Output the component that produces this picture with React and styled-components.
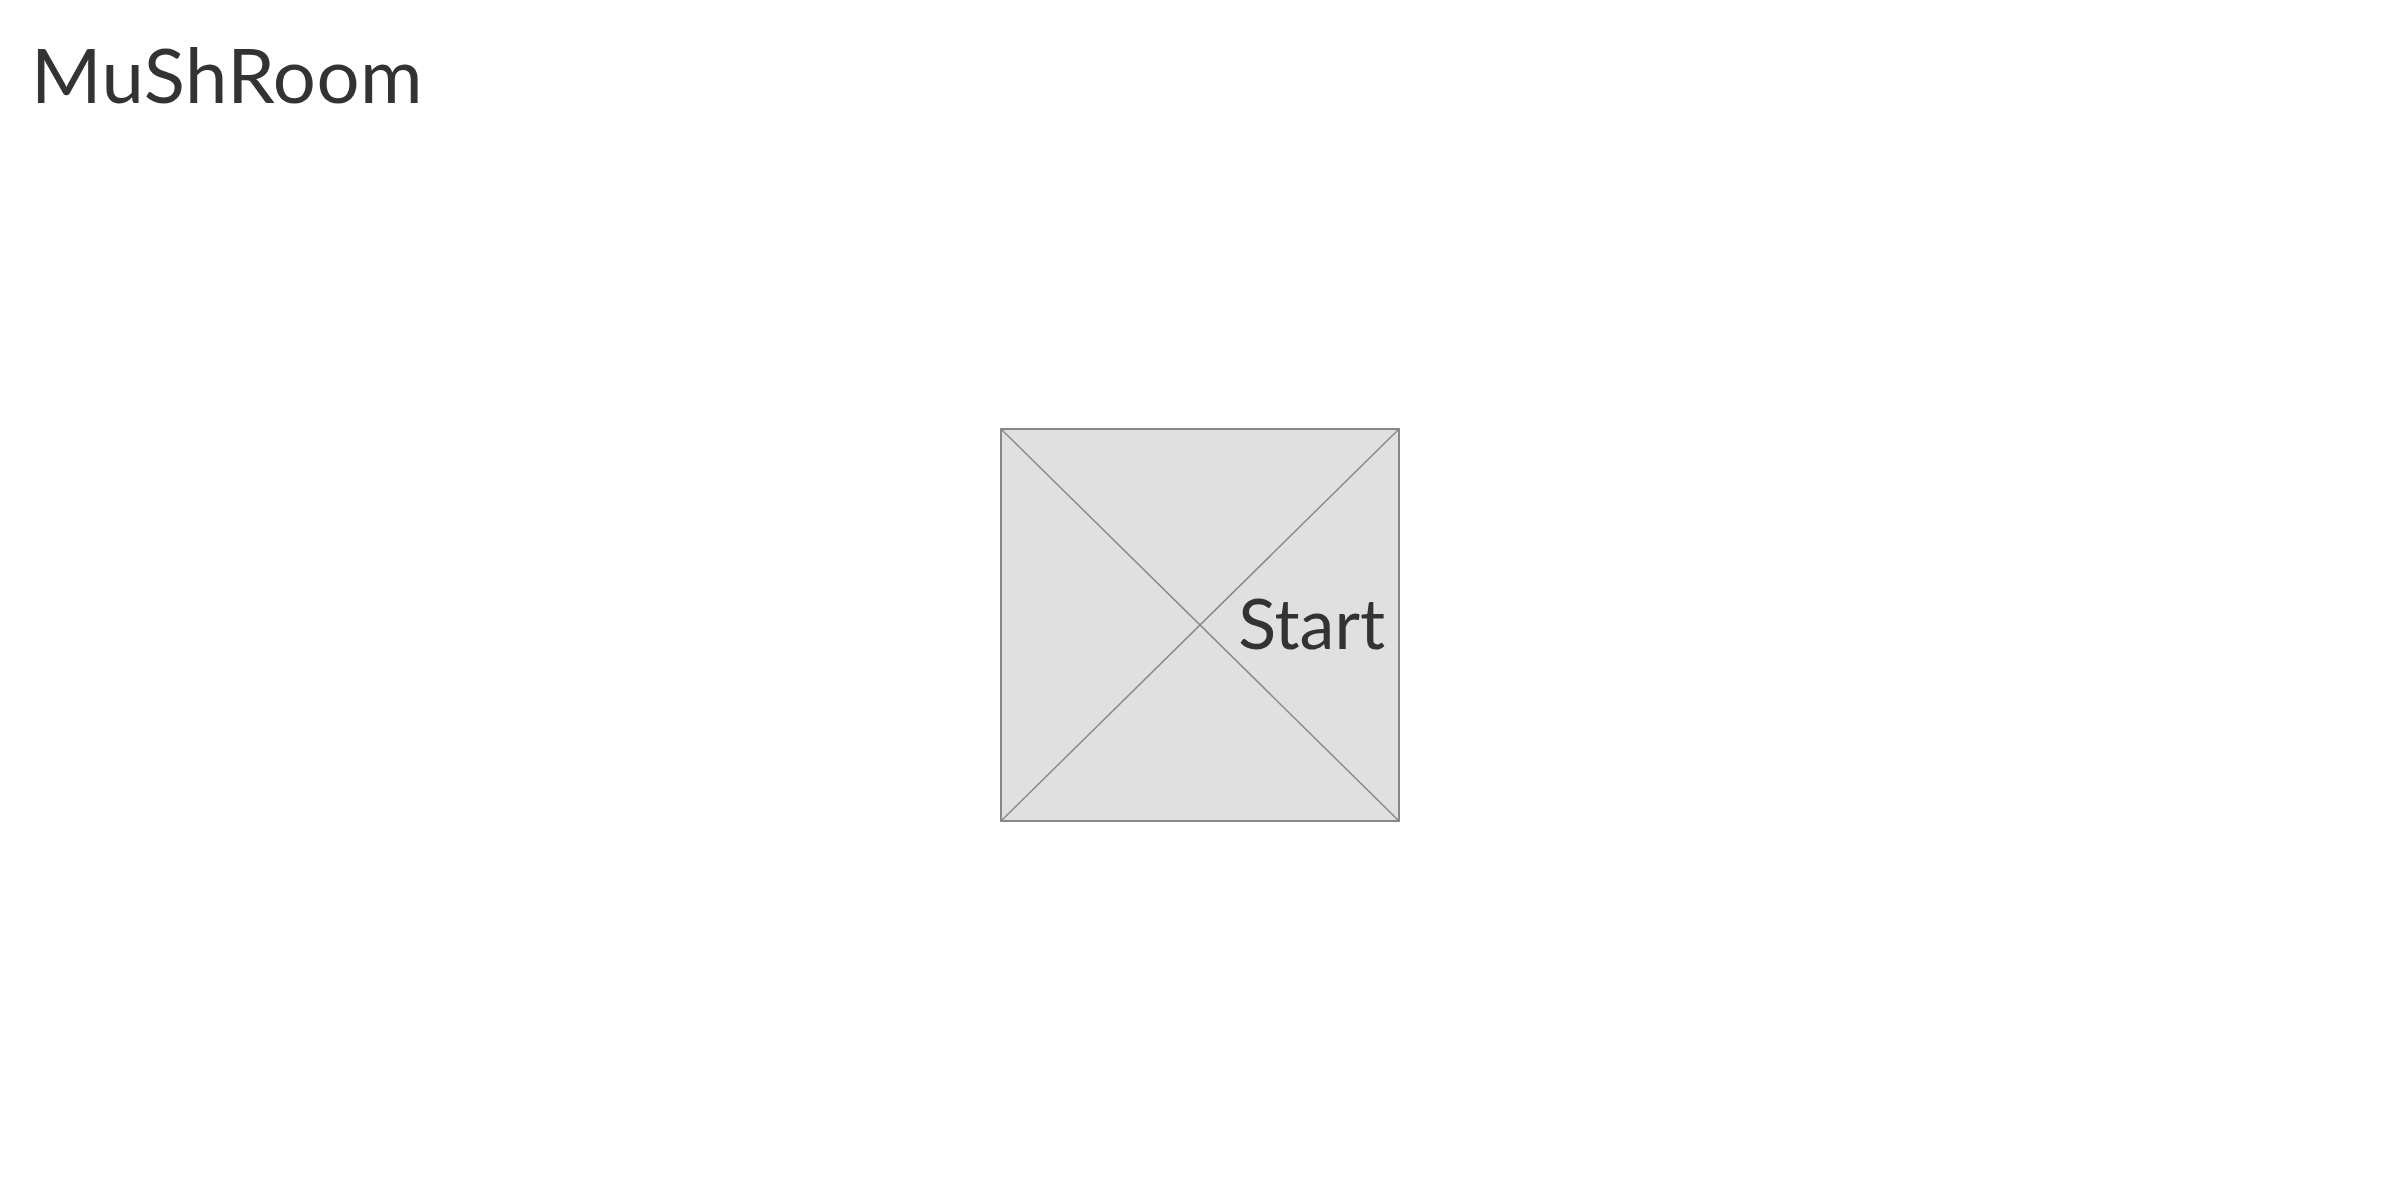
import styled, { createGlobalStyle } from "styled-components";

const GlobalStyle = createGlobalStyle`
  html, body {
    margin: 0;
    padding: 0;
    background: #ffffff;
    font-family: Lato, "Noto Sans", sans-serif;
    color: #333333;
  }
`;

function App() {
  return (
    <Page>
      <GlobalStyle />
      <Header>
        <Title>MuShRoom</Title>
      </Header>
      <Main>
        <StartButton>
          <Cross viewBox="0 0 400 394" preserveAspectRatio="none">
            <line x1="0" y1="0" x2="400" y2="394" />
            <line x1="400" y1="0" x2="0" y2="394" />
          </Cross>
          <Label>Start</Label>
        </StartButton>
      </Main>
    </Page>
  );
}

export default App;

const Page = styled.div`
  width: 100vw;
  height: 100vh;
  display: flex;
  flex-direction: column;
`;

const Header = styled.header`
  padding: 36px 0 0 31px;
  height: 110px;
  box-sizing: border-box;
`;

const Title = styled.h1`
  margin: 0;
  font-family: Lato, sans-serif;
  font-weight: 400;
  font-size: 76px;
  line-height: 1;
  letter-spacing: 0.5px;
  color: #333333;
`;

const Main = styled.main`
  flex: 1;
  display: flex;
  align-items: center;
  justify-content: center;
  padding-bottom: 60px;
`;

const StartButton = styled.div`
  position: relative;
  width: 400px;
  height: 394px;
  box-sizing: border-box;
  border: 2px solid #888888;
  background: #e0e0e0;
  display: flex;
  align-items: center;
  justify-content: flex-end;
  padding-right: 13px;
  cursor: pointer;
`;

const Cross = styled.svg`
  position: absolute;
  inset: 0;
  width: 100%;
  height: 100%;
  stroke: #888888;
  stroke-width: 1.5;
`;

const Label = styled.span`
  position: relative;
  margin-bottom: 6px;
  font-family: Lato, sans-serif;
  font-size: 70px;
  line-height: 1;
  color: #333333;
`;
